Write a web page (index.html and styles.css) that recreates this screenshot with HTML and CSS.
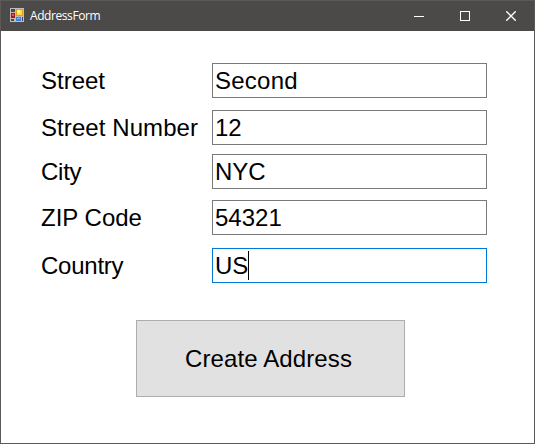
FILE: index.html
```html
<!DOCTYPE html>
<html lang="en">
<head>
<meta charset="utf-8">
<title>AddressForm</title>
<link rel="stylesheet" href="styles.css">
</head>
<body>
<div class="window">
  <header class="titlebar">
    <svg class="app-icon" width="14" height="14" viewBox="0 0 14 14" shape-rendering="crispEdges">
      <rect width="14" height="14" fill="#bdbdbd"/>
      <path fill="#4c4a48" d="M1 1h4v3H1zM1 11h3v2H1zM12 9h1v4h-1z"/>
      <rect x="1" y="5" width="4" height="5" fill="#b3160e"/>
      <rect x="2" y="6" width="2" height="2" fill="#e0584c"/>
      <rect x="6" y="1" width="7" height="7" fill="#e0a010"/>
      <rect x="7" y="2" width="5" height="5" fill="#ffd94a"/>
      <rect x="7" y="2" width="3" height="3" fill="#fff0a0"/>
      <rect x="6" y="9" width="5" height="4" fill="#3f7fe0"/>
      <rect x="7" y="10" width="3" height="1" fill="#8db8f5"/>
    </svg>
    <span class="title">AddressForm</span>
    <div class="controls">
      <span class="control"><svg width="10" height="10"><path d="M0 5.5h10" stroke="#fff"/></svg></span>
      <span class="control"><svg width="10" height="10"><rect x=".5" y=".5" width="9" height="9" fill="none" stroke="#fff"/></svg></span>
      <span class="control"><svg width="10" height="10"><path d="M.2 .2l9.6 9.6M9.8 .2l-9.6 9.6" stroke="#fff" stroke-width="1.3"/></svg></span>
    </div>
  </header>
  <main class="form">
    <div class="row row-street"><span class="label">Street</span><div class="field loose">Second</div></div>
    <div class="row row-number"><span class="label wide">Street Number</span><div class="field">12</div></div>
    <div class="row row-city"><span class="label tight">City</span><div class="field">NYC</div></div>
    <div class="row row-zip"><span class="label">ZIP Code</span><div class="field">54321</div></div>
    <div class="row"><span class="label tight">Country</span><div class="field focused">US<i class="caret"></i></div></div>
    <button class="submit" type="button">Create Address</button>
  </main>
</div>
</body>
</html>
```

FILE: styles.css
```css
* { box-sizing: border-box; }

body {
  margin: 0;
  background: #fff;
  color: #000;
  font: 24px "Liberation Sans", Arial, sans-serif;
}

.window {
  width: 535px;
  height: 444px;
  border: 1px solid #5b5a58;
  overflow: hidden;
}

.titlebar {
  display: flex;
  align-items: center;
  height: 30px;
  padding-left: 9px;
  background: #4c4a48;
}

.app-icon { margin-top: -2px; }

.title {
  margin-left: 6px;
  margin-top: -1px;
  color: #fff;
  font: 12px/16px "Segoe UI", "Open Sans", sans-serif;
  letter-spacing: -0.42px;
}

.controls {
  display: flex;
  margin-left: auto;
}

.control {
  display: flex;
  align-items: center;
  justify-content: center;
  width: 46px;
  height: 28px;
}

.form { padding: 32px 47px 0 40px; }

.row {
  display: grid;
  grid-template-columns: 171px 275px;
  height: 35px;
}

.row-street { margin-bottom: 12px; }
.row-number { margin-bottom: 9px; }
.row-city { margin-bottom: 11px; }
.row-zip { margin-bottom: 13px; }

.label {
  line-height: 35px;
  white-space: nowrap;
}

.wide { letter-spacing: 0.08px; }
.tight { letter-spacing: -0.25px; }
.loose { letter-spacing: 0.25px; }

.field {
  display: flex;
  border: 1px solid #7a7a7a;
  padding-left: 2px;
  line-height: 33px;
}

.focused { border-color: #0078d7; }

.caret {
  width: 1px;
  height: 29px;
  margin-top: 2px;
  background: #000;
}

.submit {
  display: block;
  width: 269px;
  height: 77px;
  margin: 37px 0 0 95px;
  padding: 0 4px 0 0;
  border: 1px solid #adadad;
  background: #e1e1e1;
  color: #000;
  font: inherit;
  letter-spacing: 0.12px;
}
```
